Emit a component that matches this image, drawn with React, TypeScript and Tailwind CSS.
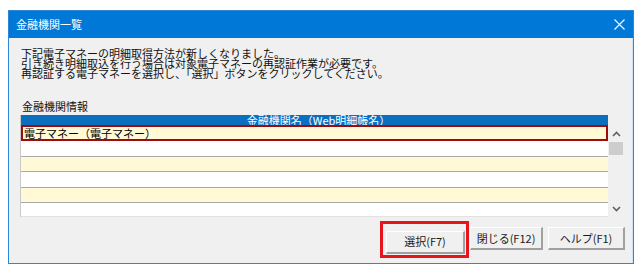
import React from 'react';

const font = { fontFamily: '"Noto Sans CJK JP", "Noto Sans", sans-serif' };

type Row = { label: string; tone: 'yellow' | 'white'; h: string; selected?: boolean; last?: boolean };

const rows: Row[] = [
  { label: '電子マネー（電子マネー）', tone: 'yellow', h: 'h-[16px]', selected: true },
  { label: '', tone: 'white', h: 'h-[16px]' },
  { label: '', tone: 'yellow', h: 'h-[15px]' },
  { label: '', tone: 'white', h: 'h-[16px]' },
  { label: '', tone: 'yellow', h: 'h-[15px]' },
  { label: '', tone: 'white', h: 'h-[14px]', last: true },
];

const DialogButton = ({ label, width }: { label: string; width: string }) => (
  <button
    className={`${width} h-[23px] bg-[#f0f0f0] border-t border-l border-t-white border-l-white border-r-2 border-b-2 border-r-[#a0a0a0] border-b-[#a0a0a0] text-[11px] leading-none text-[#1a1a1a]`}
  >
    {label}
  </button>
);

export default function App() {
  return (
    <div className="w-[642px] h-[272px] bg-white pt-[10px] pl-[8px]" style={font}>
      <div className="w-[626px] h-[254px] border border-[#2f86d6] flex flex-col bg-[#f0f0f0]">
        {/* title bar */}
        <div className="h-[27px] bg-[#0078d7] flex items-center justify-between pl-[7px] pr-[8px] shrink-0">
          <span className="text-white text-[11px] leading-none">金融機関一覧</span>
          <svg width="11" height="11" viewBox="0 0 11 11" className="text-white">
            <path d="M0.5 0.5 L10.5 10.5 M10.5 0.5 L0.5 10.5" stroke="currentColor" strokeWidth="1.1" />
          </svg>
        </div>

        {/* body */}
        <div className="flex-1 pl-[11px] pr-[8px] pt-[10px] border-r border-[#cfe4f7]">
          <div className="pl-[1px] text-[11px] leading-[10px] text-[#111] whitespace-nowrap">
            <p>下記電子マネーの明細取得方法が新しくなりました。</p>
            <p>引き続き明細取込を行う場合は対象電子マネーの再認証作業が必要です。</p>
            <p>再認証する電子マネーを選択し、「選択」ボタンをクリックしてください。</p>
          </div>

          <p className="mt-[23px] pl-[2px] text-[11px] leading-[10px] text-[#111]">金融機関情報</p>

          {/* list */}
          <div className="mt-[4px] flex w-[604px]">
            <div className="w-[588px] flex flex-col border-l border-[#c9c9c9]">
              <div className="h-[10px] bg-[#0b6fc0] overflow-hidden flex items-center justify-center">
                <span className="text-white text-[11px] leading-[10px] pl-[8px]">金融機関名（Web明細帳名）</span>
              </div>
              {rows.map((r, i) => (
                <div
                  key={i}
                  className={`${r.h} flex items-center text-[11px] leading-none text-black ${
                    r.tone === 'yellow' ? 'bg-[#fff9d6]' : 'bg-white'
                  } ${
                    r.selected
                      ? 'border-2 border-[#9e0b0b] pl-[1px]'
                      : r.last
                      ? 'border-b border-[#e2e2e2]'
                      : 'border-b border-[#a9a9a9] pl-[2px]'
                  }`}
                >
                  {r.label}
                </div>
              ))}
            </div>
            <div className="w-[16px] flex flex-col">
              <div className="h-[10px] bg-[#f0f0f0]" />
              <div className="flex-1 bg-[#f0f0f0] flex flex-col items-center">
                <svg width="9" height="6" viewBox="0 0 9 6" className="mt-[6px] text-[#606060]">
                  <path d="M1 5 L4.5 1.5 L8 5" fill="none" stroke="currentColor" strokeWidth="1.6" />
                </svg>
                <div className="mt-[5px] w-[14px] h-[13px] bg-[#cdcdcd]" />
                <div className="flex-1" />
                <svg width="9" height="6" viewBox="0 0 9 6" className="mb-[5px] text-[#606060]">
                  <path d="M1 1 L4.5 4.5 L8 1" fill="none" stroke="currentColor" strokeWidth="1.6" />
                </svg>
              </div>
            </div>
          </div>

          {/* buttons */}
          <div className="mt-[10px] flex justify-end gap-[5px] pr-[0px] -mr-[1px]">
            <div className="relative">
              <DialogButton label="選択(F7)" width="w-[79px]" />
              <div className="absolute left-[-6px] top-[-6px] w-[89px] h-[37px] border-[3px] border-[#e8141b] pointer-events-none" />
            </div>
            <DialogButton label="閉じる(F12)" width="w-[73px]" />
            <DialogButton label="ヘルプ(F1)" width="w-[77px]" />
          </div>
        </div>
      </div>
    </div>
  );
}
